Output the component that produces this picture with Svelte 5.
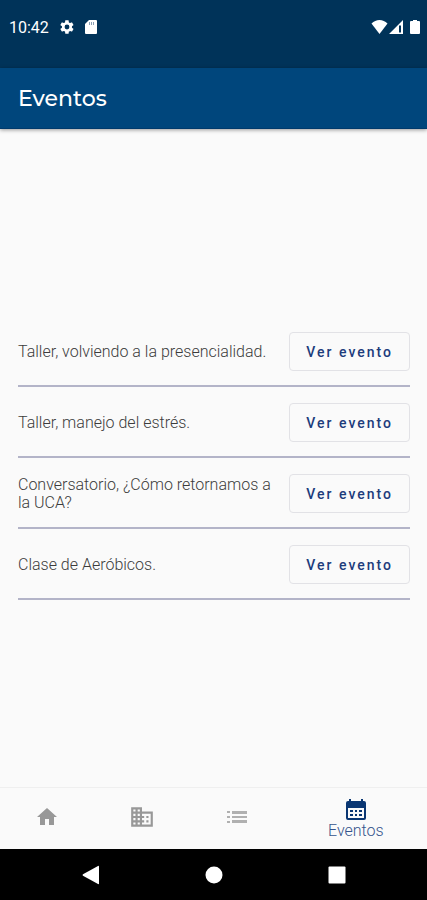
<script>
	let eventos = [
		"Taller, volviendo a la presencialidad.",
		"Taller, manejo del estrés.",
		"Conversatorio, ¿Cómo retornamos a la UCA?",
		"Clase de Aeróbicos.",
	];
</script>

<div class="screen">
	<div class="status">
		<span class="time">10:42</span>
		<svg class="gear" viewBox="0 0 24 24" width="16" height="16">
			<path fill-rule="evenodd" d="M19.4 13c0-.3.1-.6.1-1s0-.7-.1-1l2.100-1.600c.2-.2.2-.4.1-.6l-2-3.500c-.1-.2-.4-.3-.6-.2l-2.500 1c-.5-.4-1.100-.7-1.700-1L14.400 2.400c0-.2-.2-.4-.5-.4h-4c-.2 0-.4.2-.5.4L9 5.100c-.6.2-1.200.6-1.700 1l-2.500-1c-.2-.1-.5 0-.6.2l-2 3.500c-.1.2-.1.5.1.6L4.500 11c0 .3-.1.7-.1 1s0 .7.1 1l-2.200 1.600c-.2.2-.2.4-.1.6l2 3.500c.1.2.4.3.6.2l2.500-1c.5.4 1.100.7 1.700 1l.4 2.700c0 .2.2.4.5.4h4c.2 0 .5-.2.5-.4l.4-2.700c.6-.2 1.200-.6 1.700-1l2.500 1c.2.1.5 0 .6-.2l2-3.500c.1-.2.1-.5-.1-.6zM12 15.600a3.600 3.600 0 1 1 0-7.200 3.600 3.600 0 0 1 0 7.200z" />
		</svg>
		<svg class="card" viewBox="0 0 14 16" width="14" height="16">
			<path d="M5 1h7q1 0 1 1v12q0 1-1 1H2q-1 0-1-1V5z" />
			<path class="notch" d="M5 3h1v3H5zM7 3h1v3H7zM9 3h1v3H9z" />
		</svg>
		<div class="signals">
			<svg viewBox="0 0 17 16" width="17" height="16">
				<path d="M8.500 15 .5 4.500Q4 1 8.500 1t8 3.500z" />
			</svg>
			<svg viewBox="0 0 16 16" width="16" height="16">
				<path fill-rule="evenodd" d="M15 1v14H1zM11 6.500v7h2v-7z" />
			</svg>
			<svg class="battery" viewBox="0 0 10 16" width="10" height="16">
				<path d="M3 1h4v1h2q1 0 1 1v11q0 1-1 1H1q-1 0-1-1V3q0-1 1-1h2z" />
			</svg>
		</div>
	</div>

	<header>
		<h1>Eventos</h1>
	</header>

	<main>
		<ul>
			{#each eventos as evento}
				<li>
					<span>{evento}</span>
					<button>Ver evento</button>
				</li>
			{/each}
		</ul>
	</main>

	<nav class="tabs">
		<a href="#inicio" aria-label="Inicio">
			<svg viewBox="0 0 24 24" width="24" height="24">
				<path d="M10 20v-6h4v6h5v-8h3L12 3 2 12h3v8z" />
			</svg>
		</a>
		<a href="#campus" aria-label="Campus">
			<svg viewBox="0 0 24 24" width="26" height="26">
				<path d="M12 7V3H2v18h20V7H12zM6 19H4v-2h2v2zm0-4H4v-2h2v2zm0-4H4V9h2v2zm0-4H4V5h2v2zm4 12H8v-2h2v2zm0-4H8v-2h2v2zm0-4H8V9h2v2zm0-4H8V5h2v2zm10 12h-8v-2h2v-2h-2v-2h2v-2h-2V9h8v10zm-2-8h-2v2h2v-2zm0 4h-2v2h2v-2z" />
			</svg>
		</a>
		<a href="#lista" aria-label="Lista">
			<svg class="list" viewBox="0 0 24 24" width="24" height="24">
				<path d="M2 6h3v2H2zM7 6h15v3H7zM2 11h3v2H2zM7 11h15v2H7zM2 16h3v2H2zM7 15h15v3H7z" />
			</svg>
		</a>
		<a class="active" href="#eventos">
			<svg viewBox="0 0 24 24" width="24" height="24">
				<path fill-rule="evenodd" d="M5 1h2v2h10V1h2v2h1q2 0 2 2v15q0 2-2 2H4q-2 0-2-2V5q0-2 2-2h1zM4 10v10h16V10z" />
				<path d="M6 12h3v2H6zM11 12h2v2h-2zM15 12h3v2h-3zM6 16h3v2H6zM11 16h2v2h-2zM15 16h3v2h-3z" />
			</svg>
			<span>Eventos</span>
		</a>
	</nav>

	<div class="system">
		<button aria-label="Atrás">
			<svg viewBox="0 0 20 20" width="20" height="20">
				<path d="M18 1.500v17q0 1-1 .5L2 10.700q-1-.7 0-1.400L17 1q1-.5 1 .5z" />
			</svg>
		</button>
		<button aria-label="Pantalla de inicio">
			<svg viewBox="0 0 20 20" width="20" height="20">
				<circle cx="10" cy="10" r="8.500" />
			</svg>
		</button>
		<button aria-label="Recientes">
			<svg viewBox="0 0 20 20" width="20" height="20">
				<rect x="1.500" y="1.500" width="17" height="17" rx="1" />
			</svg>
		</button>
	</div>
</div>

<style>
:global(body){
	margin:0;
	background:#fafafa;
}

.screen{
	display:flex;
	flex-direction:column;
	min-height:100vh;
	font-family:Roboto, sans-serif;
	color:#3c3c3c;
}

svg{
	display:block;
	fill:currentColor;
}

.status{
	display:flex;
	align-items:center;
	height:54px;
	padding:0 7px 14px 9px;
	background:#003359;
	color:white;
}

.time{
	font-size:16px;
}

.gear{
	margin-left:10px;
}

.card{
	margin-left:9px;
}

.notch{
	fill:#8ba0b5;
}

.signals{
	display:flex;
	margin-left:auto;
}

.battery{
	margin-left:6px;
}

header{
	display:flex;
	align-items:center;
	height:60px;
	padding:0 18px;
	background:#00467c;
	border-bottom:1px solid #003a6c;
	color:white;
	box-shadow:0 1px 4px rgba(0, 0, 0, 0.4);
}

h1{
	margin:0;
	font-family:Montserrat, Inter, sans-serif;
	font-size:22px;
	font-weight:500;
}

main{
	flex:1;
	display:flex;
	flex-direction:column;
	justify-content:center;
	padding:0 17px 0 18px;
}

ul{
	list-style:none;
	margin:0;
	padding:0;
}

li{
	display:flex;
	justify-content:space-between;
	align-items:center;
	gap:12px;
	padding:16px 0 14px;
	border-bottom:2px solid #b3b4c8;
	font-size:16px;
	font-weight:300;
	line-height:18px;
}

li button{
	flex:none;
	height:39px;
	padding:0 16px;
	border:1px solid #e2e2e6;
	border-radius:4px;
	background:transparent;
	color:#1d3c7c;
	font-family:inherit;
	font-size:14px;
	font-weight:500;
	letter-spacing:2px;
}

.tabs{
	display:flex;
	height:61px;
	border-top:1px solid #efefef;
}

.tabs a{
	flex:2;
	display:flex;
	flex-direction:column;
	align-items:center;
	justify-content:center;
	padding-bottom:3px;
	color:#989898;
	text-decoration:none;
}

.tabs .list{
	color:#b0b0b0;
}

.tabs .active{
	flex:3;
	padding-bottom:0;
	color:#0a3672;
}

.active span{
	color:#35548c;
	font-size:16px;
	font-weight:300;
	line-height:18px;
}

.system{
	display:flex;
	justify-content:center;
	gap:103px;
	height:51px;
	background:black;
}

.system button{
	padding:0;
	border:none;
	background:none;
	color:white;
}
</style>
